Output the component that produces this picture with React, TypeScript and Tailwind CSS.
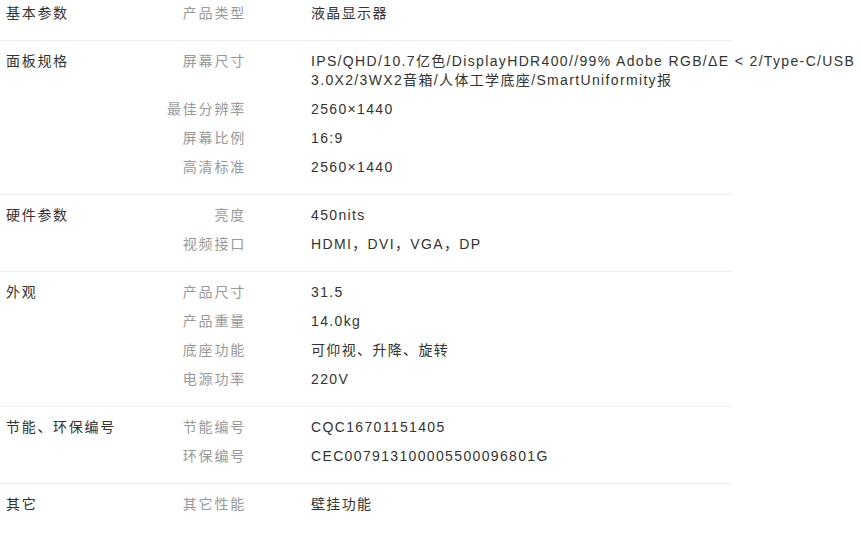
const groups: { title: string; items: [string, string][] }[] = [
  { title: '基本参数', items: [['产品类型', '液晶显示器']] },
  {
    title: '面板规格',
    items: [
      ['屏幕尺寸', 'IPS/QHD/10.7亿色/DisplayHDR400//99% Adobe RGB/ΔE < 2/Type-C/USB 3.0X2/3WX2音箱/人体工学底座/SmartUniformity报'],
      ['最佳分辨率', '2560×1440'],
      ['屏幕比例', '16:9'],
      ['高清标准', '2560×1440'],
    ],
  },
  {
    title: '硬件参数',
    items: [
      ['亮度', '450nits'],
      ['视频接口', 'HDMI，DVI，VGA，DP'],
    ],
  },
  {
    title: '外观',
    items: [
      ['产品尺寸', '31.5'],
      ['产品重量', '14.0kg'],
      ['底座功能', '可仰视、升降、旋转'],
      ['电源功率', '220V'],
    ],
  },
  {
    title: '节能、环保编号',
    items: [
      ['节能编号', 'CQC16701151405'],
      ['环保编号', 'CEC007913100005500096801G'],
    ],
  },
  { title: '其它', items: [['其它性能', '壁挂功能']] },
];

export default function App() {
  return (
    <div
      className="w-[861px] h-[543px] overflow-hidden bg-white text-[14px] leading-[19px]"
      style={{ fontFamily: '"Liberation Sans", "Noto Sans CJK SC", sans-serif' }}
    >
      <div className="w-[732px] -mt-[7px]">
        {groups.map((g, gi) => (
          <div
            key={g.title}
            className={`flex pt-[11px] pb-[7px] ${gi < groups.length - 1 ? 'border-b border-[#eeeeee]' : ''}`}
          >
            <div className="w-[150px] shrink-0 pl-[6px] text-[#333333] tracking-[1.7px]">{g.title}</div>
            <div className="flex-1">
              {g.items.map(([k, v]) => (
                <div key={k} className="flex pb-[10px]">
                  <div className="w-[96px] shrink-0 text-right text-[#999999] tracking-[1.8px]">{k}</div>
                  <div className="w-[550px] shrink-0 ml-[65px] text-[#333333] tracking-[1.35px]">{v}</div>
                </div>
              ))}
            </div>
          </div>
        ))}
      </div>
    </div>
  );
}
